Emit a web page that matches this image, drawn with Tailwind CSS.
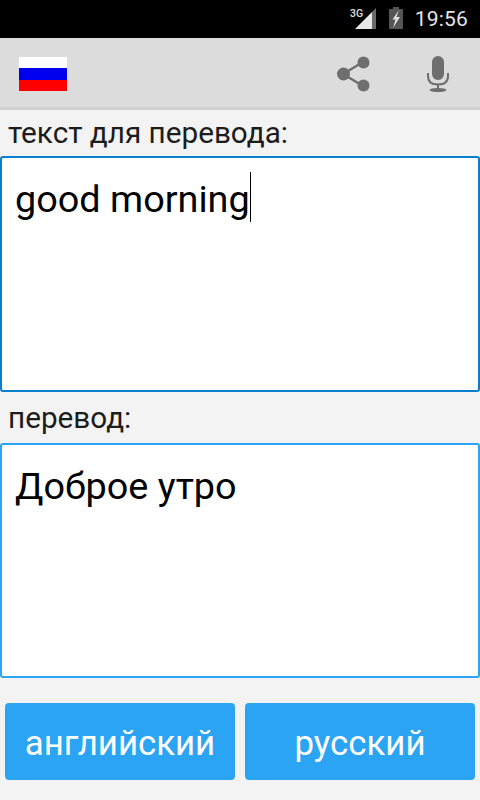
<!DOCTYPE html>
<html lang="ru">
<head>
  <meta charset="UTF-8" />
  <meta name="viewport" content="width=device-width, initial-scale=1.0"/>
  <title>Переводчик</title>
  <script src="https://cdn.jsdelivr.net/npm/@tailwindcss/browser@4"></script>
</head>
<body class="w-[480px] h-[800px] overflow-hidden bg-[#f3f3f3] font-['Roboto',sans-serif] text-black">
  <!-- статус-бар -->
  <div class="h-[38px] bg-black flex items-center justify-end">
    <svg width="28" height="38" viewBox="0 0 28 38">
      <path d="M7 29 L24 12 V29 Z" fill="#e8e8e8"/>
      <path d="M24 12 L28 8 V29 H24 Z" fill="#6a6a6a"/>
      <text x="2" y="17" font-family="Roboto" font-size="11" font-weight="500" fill="#e0e0e0" textLength="13" lengthAdjust="spacingAndGlyphs">3G</text>
    </svg>
    <svg class="ml-[13px]" width="14" height="38" viewBox="0 0 14 38">
      <rect x="4" y="7" width="6" height="2" fill="#555"/>
      <rect x="0" y="9" width="14" height="20" fill="#555"/>
      <path d="M10 10 L3.500 19.500 H6.500 L4 28 L11 17 H7.500 Z" fill="#e0e0e0"/>
    </svg>
    <span class="ml-[12px] mr-[12px] text-[21px] leading-none text-[#e4e4e4] tracking-[0.2px]">19:56</span>
  </div>

  <!-- тулбар -->
  <div class="h-[72px] bg-[#dcdcdc] border-b-[3px] border-[#cfcfcf] flex items-center">
    <div class="ml-[19px] mt-[3px] w-[48px] h-[34px] flex flex-col">
      <div class="flex-1 bg-white"></div>
      <div class="flex-1 bg-[#0000ee]"></div>
      <div class="flex-1 bg-[#ff0000]"></div>
    </div>
    <svg class="ml-auto mt-[2px]" width="34" height="36" viewBox="0 0 34 36">
      <path d="M7 18 L27 6 M7 18 L27 30" stroke="#6e6e6e" stroke-width="2.500" fill="none"/>
      <circle cx="7.500" cy="18" r="6.500" fill="#6e6e6e"/>
      <circle cx="27.500" cy="6.500" r="6" fill="#6e6e6e"/>
      <circle cx="27.500" cy="29.500" r="6" fill="#6e6e6e"/>
    </svg>
    <svg class="ml-[56px] mr-[30px] mt-[2px]" width="24" height="36" viewBox="0 0 24 36">
      <rect x="6" y="0" width="12" height="24" rx="6" fill="#6e6e6e"/>
      <path d="M2 17 V20 C2 26 6 28.500 12 28.500 C18 28.500 22 26 22 20 V17" stroke="#6e6e6e" stroke-width="2" fill="none"/>
      <rect x="11" y="28" width="2" height="5" fill="#6e6e6e"/>
      <ellipse cx="12" cy="34" rx="8.500" ry="2" fill="#6e6e6e"/>
    </svg>
  </div>

  <div class="h-[46px] pl-[8px] flex items-center text-[29.700px] leading-none text-[#1c1c1c]">текст для перевода:</div>

  <div class="h-[236px] bg-white border-2 border-[#0a7fd0] rounded-[3px] pl-[13px] pt-[18px] text-[37.800px] leading-[46px]">
    <span>good morning</span><span class="inline-block w-[1.500px] h-[50px] bg-black align-top mt-[-4px]"></span>
  </div>

  <div class="h-[51px] pl-[8px] flex items-center text-[29.700px] leading-none text-[#1c1c1c]">перевод:</div>

  <div class="h-[235px] bg-white border-2 border-[#2ba5f3] rounded-[3px] pl-[13px] pt-[18px] text-[37.800px] leading-[46px]">Доброе утро</div>

  <div class="mt-[25px] px-[5px] flex gap-[10px]">
    <button class="w-[230px] h-[77px] pt-[3px] bg-[#2ba5f3] rounded-[4px] text-white text-[34.800px] leading-none">английский</button>
    <button class="w-[230px] h-[77px] pt-[3px] bg-[#2ba5f3] rounded-[4px] text-white text-[34.800px] leading-none">русский</button>
  </div>
</body>
</html>
